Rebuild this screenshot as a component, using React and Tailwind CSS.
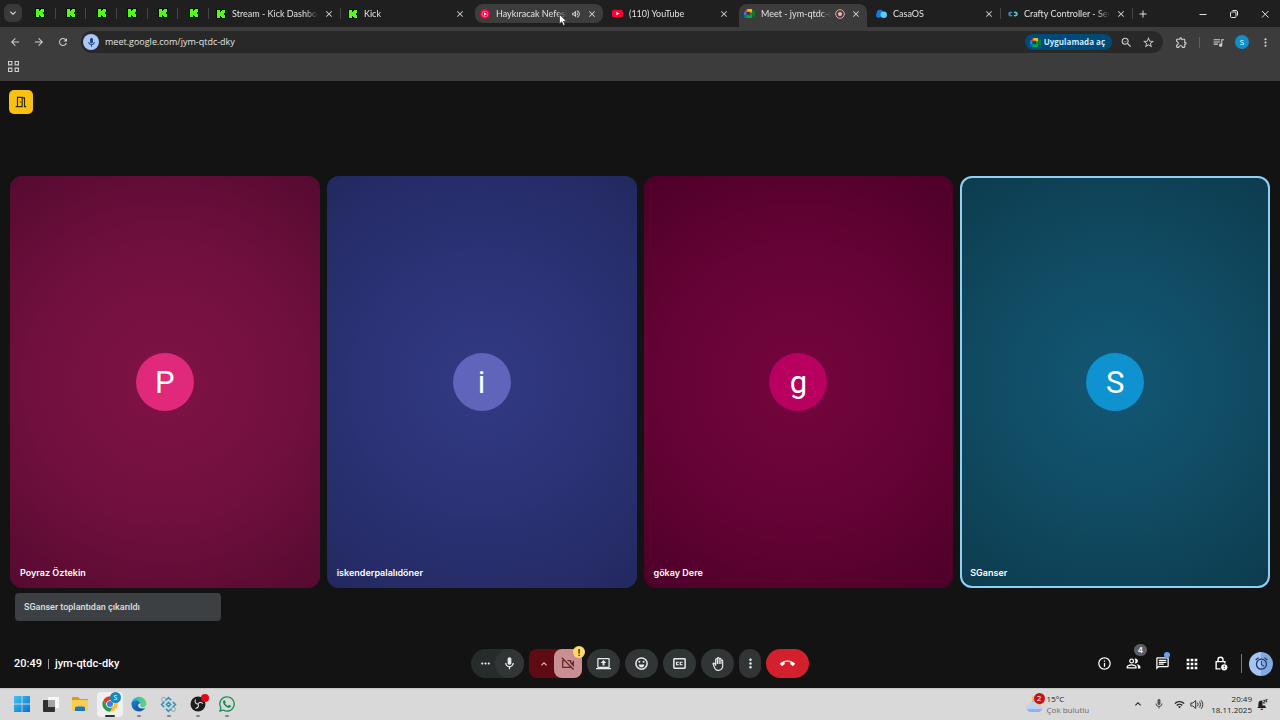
import React from "react";
import {
  MdAdd, MdAlarm, MdApps, MdArrowBack, MdArrowForward, MdCallEnd, MdClose, MdExpandLess, MdExpandMore,
  MdMoreHoriz, MdMoreVert, MdOutlineBackHand, MdOutlineChat,
  MdOutlineExtension, MdOutlineInfo, MdOutlineMeetingRoom, MdOutlineMic, MdOutlinePeopleAlt,
  MdOutlineVideocamOff, MdOutlineVolumeUp, MdQueueMusic, MdRefresh, MdStarBorder, MdWifi, MdZoomOut,
} from "react-icons/md";
import { FaWhatsapp } from "react-icons/fa";

const KickIcon = () => (
  <svg viewBox="0 0 10 10" className="size-[10px] shrink-0" aria-hidden="true">
    <rect width="10" height="10" rx="1" fill="#04140a" />
    <path d="M1 1h3v2h1V2h1V1h3v3H8v2h1v3H6V8H5V7H4v2H1z" fill="#53fc18" />
  </svg>
);

const MusicIcon = () => (
  <svg viewBox="0 0 20 20" className="size-[10px] shrink-0" aria-hidden="true">
    <circle cx="10" cy="10" r="10" fill="#f00042" />
    <circle cx="10" cy="10" r="5.8" fill="none" stroke="#ff9db5" strokeWidth="1.3" />
    <path d="M8 6.6 13.6 10 8 13.4z" fill="#fff" />
  </svg>
);

const YouTubeIcon = () => (
  <svg viewBox="0 0 20 20" className="size-[11px] shrink-0" aria-hidden="true">
    <rect y="3" width="20" height="14" rx="4" fill="#ff0033" />
    <path d="M8 6.8 13.5 10 8 13.2z" fill="#fff" />
  </svg>
);

const MeetIcon = () => (
  <svg viewBox="0 0 24 20" className="h-[9px] w-[11px] shrink-0" aria-hidden="true">
    <path d="M7 0v7H0z" fill="#ea4335" />
    <path d="M0 7h5v7H0z" fill="#2684fc" />
    <path d="M0 14h5v6H2a2 2 0 0 1-2-2z" fill="#0066da" />
    <path d="M7 0h9a2 2 0 0 1 2 2v6l-4 2V6H7z" fill="#ffba00" />
    <path d="M5 14h9v-4l4-2v10a2 2 0 0 1-2 2H5z" fill="#00ac47" />
    <path d="m14 10 8.500-7.300c.6-.5 1.500 0 1.500.8v13c0 .8-.9 1.300-1.500.8z" fill="#00832d" />
  </svg>
);

const CasaIcon = () => (
  <svg viewBox="0 0 22 20" className="h-[10px] w-[11px] shrink-0" aria-hidden="true">
    <circle cx="8" cy="8" r="6.500" fill="#1478dc" />
    <circle cx="5" cy="12.500" r="5" fill="#1478dc" />
    <circle cx="15.500" cy="11.500" r="6.500" fill="#52d0fb" />
  </svg>
);

const CraftyIcon = () => (
  <svg viewBox="0 0 20 20" className="size-[10px] shrink-0" fill="none" strokeWidth="2.600" aria-hidden="true">
    <path d="M8 7.500A3.600 3.600 0 1 0 8 12.500" stroke="#3d8fd6" />
    <path d="M12 7.500A3.600 3.600 0 1 1 12 12.500" stroke="#5ad0e6" />
    <path d="M3 10h3M14 10h3" stroke="#8fb9e8" strokeWidth="1.500" />
  </svg>
);

const RecordIcon = () => (
  <svg viewBox="0 0 20 20" className="size-[10px] shrink-0" aria-hidden="true">
    <circle cx="10" cy="10" r="8.600" fill="none" stroke="#f2b8b5" strokeWidth="1.800" />
    <circle cx="10" cy="10" r="4.200" fill="#f2b8b5" />
  </svg>
);

const tabs = [
  { title: "Stream - Kick Dashboard", icon: <KickIcon />, line: true },
  { title: "Kick", icon: <KickIcon /> },
  { title: "Haykıracak Nefesim", icon: <MusicIcon />, hover: true, extra: <MdOutlineVolumeUp className="size-[10px] shrink-0" /> },
  { title: "(110) YouTube", icon: <YouTubeIcon /> },
  { title: "Meet - jym-qtdc-dky", icon: <MeetIcon />, active: true, extra: <RecordIcon /> },
  { title: "CasaOS", icon: <CasaIcon />, line: true },
  { title: "Crafty Controller - Server", icon: <CraftyIcon />, line: true },
];

function Tab({ tab }) {
  const face = tab.active ? "bg-[#3c3c3c] rounded-t-lg pb-1" : tab.hover ? "bg-[#3d3d3d] rounded-lg mb-1" : "mb-1";
  return (
    <div className="flex h-full max-w-[132px] min-w-0 flex-1 items-stretch px-0.5 pt-1">
      <div className={`flex min-w-0 flex-1 items-center gap-1 pr-1.5 pl-[5px] ${face}`}>
        <button role="tab" aria-selected={!!tab.active} className="flex min-w-0 flex-1 items-center gap-1.5">
          {tab.icon}
          <span className="min-w-0 flex-1 overflow-hidden text-left whitespace-nowrap [mask-image:linear-gradient(to_right,black_85%,transparent)]">
            {tab.title}
          </span>
        </button>
        {tab.extra}
        <button aria-label={`${tab.title} sekmesini kapat`} className="pl-0.5">
          <MdClose className="size-[10px] text-[#dedede]" />
        </button>
      </div>
      {tab.line && <span className="mt-1 mb-2 -mr-0.5 w-px bg-[#474747]" />}
    </div>
  );
}

function TabStrip() {
  return (
    <header className="flex h-[27px] items-stretch bg-[#1f1f1f] pl-1 text-[9px] leading-3 text-[#e2e2e2] [font-family:Lato,sans-serif]">
      <button aria-label="Sekmelerde ara" className="mt-1 mr-[3px] grid size-[18px] place-items-center rounded-md bg-[#3a3a3a]">
        <MdExpandMore className="size-3" />
      </button>
      <div role="tablist" className="flex min-w-0 flex-1">
        <div className="grid w-[184px] shrink-0 grid-cols-6">
          {[1, 2, 3, 4, 5, 6].map((n) => (
            <button key={n} role="tab" aria-selected="false" aria-label={`Kick ${n}`} className="flex items-center justify-center pb-px">
              <span className="flex-1" />
              <KickIcon />
              <span className="flex flex-1 justify-end"><span className="h-[11px] w-px bg-[#474747]" /></span>
            </button>
          ))}
        </div>
        {tabs.map((t) => <Tab key={t.title} tab={t} />)}
        <button aria-label="Yeni sekme" className="px-1"><MdAdd className="size-3" /></button>
      </div>
      <div className="flex items-center">
        <button aria-label="Simge durumuna küçült" className="grid w-[30px] place-items-center">
          <svg viewBox="0 0 10 10" className="size-[10px]" stroke="currentColor"><path d="M1.500 5.500h7" /></svg>
        </button>
        <button aria-label="Önceki boyut" className="grid w-8 place-items-center">
          <svg viewBox="0 0 10 10" className="size-[10px]" fill="none" stroke="currentColor"><rect x="1.500" y="3" width="5.500" height="5.500" rx="1" /><path d="M3.500 1.500h3.500a1.500 1.500 0 0 1 1.500 1.500v3.500" /></svg>
        </button>
        <button aria-label="Kapat" className="grid w-[30px] place-items-center">
          <svg viewBox="0 0 10 10" className="size-[10px]" stroke="currentColor"><path d="m2 2 6.500 6.500M8.500 2 2 8.500" /></svg>
        </button>
      </div>
    </header>
  );
}

function Toolbar() {
  return (
    <nav className="bg-[#3c3c3c] text-[#d0d0d0]">
      <div className="flex h-[30px] items-center pr-2 pl-[9px]">
        <button aria-label="Geri" className="mr-3"><MdArrowBack className="size-3" /></button>
        <button aria-label="İleri" className="mr-3"><MdArrowForward className="size-3" /></button>
        <button aria-label="Yenile" className="mr-3"><MdRefresh className="size-3" /></button>
        <div className="flex h-[22px] min-w-0 flex-1 items-center rounded-full bg-[#282828] pr-2 pl-0.5">
          <button aria-label="Mikrofon kullanılıyor" className="grid size-4 place-items-center rounded-full bg-[#a8c7fa] text-[#1d3f77]">
            <MdOutlineMic className="size-[11px]" />
          </button>
          <input aria-label="Adres çubuğu" defaultValue="meet.google.com/jym-qtdc-dky" className="ml-1.5 min-w-0 flex-1 bg-transparent text-[9px] leading-4 text-[#e3e3e3] outline-none" />
          <button className="mr-2 flex h-4 items-center gap-[3px] rounded-full bg-[#004a77] pr-[7px] pl-[5px] text-[8px] font-bold text-[#c8e8ff]">
            <MeetIcon />Uygulamada aç
          </button>
          <button aria-label="Uzaklaştır" className="mr-[9px]"><MdZoomOut className="size-[13px]" /></button>
          <button aria-label="Yer işareti ekle"><MdStarBorder className="size-[13px]" /></button>
        </div>
        <button aria-label="Uzantılar" className="ml-3"><MdOutlineExtension className="size-[13px]" /></button>
        <span className="ml-[11px] h-[11px] w-px bg-[#606060]" />
        <button aria-label="Medya denetimi" className="ml-3"><MdQueueMusic className="size-[13px]" /></button>
        <button aria-label="Profil" className="ml-2.5 grid size-[14px] place-items-center rounded-full bg-[#0f90cc] text-[8px] leading-none text-white">S</button>
        <button aria-label="Chrome menüsü" className="ml-2.5"><MdMoreVert className="size-[13px]" /></button>
      </div>
      <div className="flex h-6 items-start pt-1 pl-2">
        <button aria-label="Sekme grupları">
          <svg viewBox="0 0 10 10" className="size-[11px]" fill="none" stroke="currentColor">
            <path d="M.5.5h3v3h-3zM6.500.5h3v3h-3zM.5 6.500h3v3h-3zM6.500 6.500h3v3h-3z" />
          </svg>
        </button>
      </div>
    </nav>
  );
}

const people = [
  { name: "Poyraz Öztekin", letter: "P", tile: "bg-[radial-gradient(circle_at_center,#801246,#71103e_50%,#560a30)]", dot: "bg-[#e0297b]" },
  { name: "iskenderpalalıdöner", letter: "i", tile: "bg-[radial-gradient(circle_at_center,#323a84,#2b3275_50%,#222960)]", dot: "bg-[#6065bb]" },
  { name: "gökay Dere", letter: "g", tile: "bg-[radial-gradient(circle_at_center,#74053e,#660336_50%,#4d0029)]", dot: "bg-[#b7005f]" },
  { name: "SGanser", letter: "S", tile: "bg-[radial-gradient(circle_at_center,#135774,#104b63_50%,#0d3b4d)]", dot: "bg-[#0f93d0]", speaking: true },
];

function Tile({ person }) {
  return (
    <section className={`grid min-h-60 grid-rows-[1fr_auto_1fr] overflow-hidden rounded-xl text-white ${person.tile} ${person.speaking ? "inset-ring-2 inset-ring-[#8fd0f5]" : ""}`}>
      <span />
      <div className={`grid size-[58px] place-items-center justify-self-center rounded-full text-[31px] leading-none [font-family:Roboto,sans-serif] ${person.dot}`}>
        {person.letter}
      </div>
      <h2 className="self-end pb-2 pl-[10px] text-[9px] leading-[14px] font-semibold">{person.name}</h2>
    </section>
  );
}

const round = "grid h-[29px] place-items-center rounded-full bg-[#323536]";

function Controls() {
  return (
    <div className="flex items-center gap-[5px] text-[#e8eaed]">
      <div className="flex h-[29px] rounded-full bg-[#282b2c]">
        <button aria-label="Ses ayarları" className="grid w-6 place-items-center pl-1"><MdMoreHoriz className="size-[13px]" /></button>
        <button aria-label="Mikrofonu kapat" className={`${round} w-[29px]`}><MdOutlineMic className="size-[15px]" /></button>
      </div>
      <div className="relative flex h-[29px] rounded-lg bg-[#5e0b13]">
        <button aria-label="Video ayarları" className="grid w-[25px] place-items-center pl-1 text-[#f3c7c6]"><MdExpandLess className="size-3" /></button>
        <button aria-label="Kamerayı aç" className="grid w-7 place-items-center rounded-lg bg-[#c98f93] text-[#67272d]"><MdOutlineVideocamOff className="size-4" /></button>
        <span className="absolute -top-[3px] -right-[3px] grid size-3 place-items-center rounded-full bg-[#fddc69] text-[9px] leading-none font-bold text-[#3a2f00]">!</span>
      </div>
      <button aria-label="Şimdi sun" className={`${round} w-[33px]`}>
        <svg viewBox="0 0 24 24" className="size-[15px]" fill="currentColor"><path fillRule="evenodd" d="M4 3h16a2 2 0 0 1 2 2v12a2 2 0 0 1-2 2h4v2H0v-2h4a2 2 0 0 1-2-2V5a2 2 0 0 1 2-2Zm0 2v12h16V5H4Z" /><path d="m12 6.500 4.500 4.500H13.500v4h-3v-4H7.500z" /></svg>
      </button>
      <button aria-label="İfade gönder" className={`${round} w-[33px]`}>
        <svg viewBox="0 0 24 24" className="size-[15px]" fill="none" stroke="currentColor" strokeWidth="2.400"><circle cx="12" cy="12" r="9" /><path d="M7.500 13.500h9a4.500 4.500 0 0 1-9 0z" fill="currentColor" stroke="none" /><circle cx="8.600" cy="9.300" r="1.600" fill="currentColor" stroke="none" /><circle cx="15.400" cy="9.300" r="1.600" fill="currentColor" stroke="none" /></svg>
      </button>
      <button aria-label="Altyazıları aç" className={`${round} w-[33px]`}>
        <svg viewBox="0 0 24 24" className="size-[15px]" fill="none" stroke="currentColor" strokeWidth="2.400"><rect x="3" y="4.500" width="18" height="15" rx="1" /><path d="M11 10H7.200v4H11M17 10h-3.800v4H17" strokeWidth="1.900" /></svg>
      </button>
      <button aria-label="El kaldır" className={`${round} w-[33px]`}><MdOutlineBackHand className="size-[14px]" /></button>
      <button aria-label="Diğer seçenekler" className={`${round} w-[22px]`}><MdMoreVert className="size-[15px]" /></button>
      <button aria-label="Aramadan ayrıl" className="grid h-[29px] w-[43px] place-items-center rounded-full bg-[#d2202c] text-white"><MdCallEnd className="size-[15px]" /></button>
    </div>
  );
}

function MeetBar() {
  return (
    <footer className="grid grid-cols-[1fr_auto_1fr] items-center px-[7px] pt-7 pb-[10px] text-white">
      <div className="flex items-center gap-1.5 pl-[7px] text-[11px] leading-4 font-medium [font-family:Roboto,sans-serif]">
        <time>20:49</time>
        <span className="h-[10px] w-px bg-[#9a9a9a]" />
        <span>jym-qtdc-dky</span>
      </div>
      <Controls />
      <div className="flex items-center justify-end">
        <button aria-label="Toplantı bilgileri" className="grid w-[29px] place-items-center"><MdOutlineInfo className="size-[15px]" /></button>
        <button aria-label="Kişiler" className="relative grid w-[29px] place-items-center">
          <MdOutlinePeopleAlt className="size-[15px]" />
          <span className="absolute -top-3 left-[15px] grid h-3 w-[13px] place-items-center rounded-full bg-[#5c5f61] text-[8px] leading-none font-semibold">4</span>
        </button>
        <button aria-label="Sohbet" className="relative grid w-[29px] place-items-center">
          <MdOutlineChat className="size-[15px]" />
          <span className="absolute -top-1 left-4 size-[6px] rounded-full bg-[#6f9bf0]" />
        </button>
        <button aria-label="Toplantı araçları" className="grid w-[29px] place-items-center"><MdApps className="size-4" /></button>
        <button aria-label="Toplantı sahibi denetimleri" className="grid w-[29px] place-items-center">
          <svg viewBox="0 0 24 24" className="size-[15px]" fill="none" stroke="currentColor" strokeWidth="2.200">
            <path d="M12 20.500H5V9h14v3M8 9V6a4 4 0 0 1 8 0v3" />
            <circle cx="18" cy="18" r="5" fill="currentColor" stroke="none" />
            <path d="M18 15.500v2.500M18 19.500v1.200" stroke="#131313" strokeWidth="1.600" />
          </svg>
        </button>
        <span className="mr-[7px] ml-1.5 h-[19px] w-px bg-[#77797b]" />
        <button aria-label="Hatırlatıcı" className="grid size-6 place-items-center rounded-full bg-[linear-gradient(to_right,#a6c5f3_50%,#84a9e0_50%)] text-[#17386e]"><MdAlarm className="size-[15px]" /></button>
      </div>
    </footer>
  );
}

const WindowsIcon = () => (
  <svg viewBox="0 0 16 16" className="size-4" aria-hidden="true">
    <defs><linearGradient id="win" x2="1" y2="1"><stop stopColor="#45c3f3" /><stop offset="1" stopColor="#0873c9" /></linearGradient></defs>
    <path d="M0 0h7.600v7.600H0zM8.400 0H16v7.600H8.400zM0 8.400h7.600V16H0zM8.400 8.400H16V16H8.400z" fill="url(#win)" />
  </svg>
);
const TaskViewIcon = () => (
  <svg viewBox="0 0 16 16" className="size-4" aria-hidden="true">
    <rect x="5" y="1" width="11" height="11" rx="1" fill="#f8f8f8" />
    <rect x="0" y="4" width="12" height="12" rx="1" fill="#303030" />
    <path d="M5 4h7v7H5z" fill="#a5a5a5" />
  </svg>
);
const FolderIcon = () => (
  <svg viewBox="0 0 18 16" className="h-4 w-[18px]" aria-hidden="true">
    <path d="M1 2a1 1 0 0 1 1-1h5l2 2h7a1 1 0 0 1 1 1v5H1z" fill="#dd9a18" />
    <rect x="1" y="4" width="16" height="11" rx="1.200" fill="#fbcf4e" />
    <path d="M4 15v-3a1.500 1.500 0 0 1 1.500-1.500h7A1.500 1.500 0 0 1 14 12v3z" fill="#1878c8" />
  </svg>
);
const ChromeIcon = () => (
  <svg viewBox="0 0 48 48" className="size-4" aria-hidden="true">
    <circle cx="24" cy="24" r="23" fill="#fff" />
    <path d="M4.100 12.500A23 23 0 0 1 43.900 12.500H24A11.500 11.500 0 0 0 14 29.700z" fill="#e33b2e" />
    <path d="M43.900 12.500A23 23 0 0 1 24 47l10-17.300A11.500 11.500 0 0 0 24 12.500z" fill="#fcc31e" />
    <path d="M4.100 12.500 14 29.700A11.500 11.500 0 0 0 34 29.700L24 47A23 23 0 0 1 4.100 12.500z" fill="#2a9d4a" />
    <circle cx="24" cy="24" r="9" fill="#3b7ded" />
  </svg>
);
const EdgeIcon = () => (
  <svg viewBox="0 0 32 32" className="size-4" aria-hidden="true">
    <defs>
      <linearGradient id="edgeTop" x2="1"><stop stopColor="#2aa7e8" /><stop offset="1" stopColor="#5fdc6d" /></linearGradient>
      <linearGradient id="edgeBase" x2="1" y2="1"><stop stopColor="#1b7fd0" /><stop offset="1" stopColor="#114a99" /></linearGradient>
    </defs>
    <path d="M1 14A15.200 15.200 0 0 1 31 15c0 5-3.500 7.500-8 7.500-4 0-5-1.500-4-3.500 2-5-2-9-7-9-5.500 0-9 3-11 4z" fill="url(#edgeTop)" />
    <path d="M1 14c2-3.500 6-6 11-5 4 1 6 3.500 6.500 6-6-1-6.500 10 4 10 3 0 5-1 6-1.500C26 28 21 31 16 31A15 15 0 0 1 1 14z" fill="url(#edgeBase)" />
  </svg>
);
const HubIcon = () => (
  <svg viewBox="0 0 32 32" className="size-[17px]" fill="none" stroke="#3097bd" strokeWidth="3" aria-hidden="true">
    <path d="m11 8 5-5 5 5M24 11l5 5-5 5M21 24l-5 5-5-5M8 21l-5-5 5-5" />
    <path d="m16 12 4 4-4 4-4-4z" />
    <g stroke="#8295a5" strokeWidth="1.500"><circle cx="7" cy="6.500" r="4" /><circle cx="25" cy="25" r="4" /></g>
  </svg>
);
const ObsIcon = () => (
  <svg viewBox="0 0 32 32" className="size-4" aria-hidden="true">
    <circle cx="16" cy="16" r="15" fill="#1c1c1e" />
    <g fill="none" stroke="#d5d5d5" strokeWidth="2.300"><path d="M16 16c-5 0-7-4-5-9" /><path d="M16 16c2.500-4.300 7-4 10-.5" /><path d="M16 16c2.500 4.300 0 8-5 9" /></g>
  </svg>
);

const apps = [
  { name: "Başlat", icon: <WindowsIcon /> },
  { name: "Görev görünümü", icon: <TaskViewIcon /> },
  { name: "Dosya Gezgini", icon: <FolderIcon /> },
  { name: "Google Chrome", icon: <ChromeIcon />, current: true, badge: "S" },
  { name: "Microsoft Edge", icon: <EdgeIcon />, running: true },
  { name: "Ağ Yöneticisi", icon: <HubIcon />, running: true },
  { name: "OBS Studio", icon: <ObsIcon />, running: true, alert: true },
  { name: "WhatsApp", icon: <FaWhatsapp className="size-[18px] text-[#178a55]" />, running: true },
];

function Taskbar() {
  return (
    <footer className="flex h-8 items-center border-t border-[#c5c5c5] bg-[#d9d9d9] pr-3 pb-px pl-[7px] text-[8px] leading-[11px] text-[#1e1e1e]">
      <div className="grid w-[235px] grid-cols-8 justify-items-center">
        {apps.map((a) => (
          <button key={a.name} aria-label={a.name} className={`relative grid h-[25px] w-[26px] place-items-center rounded ${a.current ? "bg-[#f0f0ee]" : ""}`}>
            {a.icon}
            {a.current && <span className="absolute bottom-0 left-2 h-[2px] w-[10px] rounded bg-[#303030]" />}
            {a.running && <span className="absolute bottom-0 left-[11px] h-[2px] w-1 rounded bg-[#858585]" />}
            {a.badge && <span className="absolute top-0 right-[2px] grid size-[11px] place-items-center rounded-full bg-[#1688bd] text-[7px] leading-none text-white">{a.badge}</span>}
            {a.alert && <span className="absolute top-[2px] right-[2px] size-2 rounded-full bg-[#e30613]" />}
          </button>
        ))}
      </div>
      <div className="flex-1" />
      <button className="mr-[43px] flex items-center gap-1 text-left">
        <span className="relative">
          <svg viewBox="0 0 17 17" className="size-[17px]" aria-hidden="true">
            <path d="M6 1a7 7 0 1 1-5 9 7 7 0 0 0 5-9z" fill="#f3b53c" />
            <path d="M4 16a3.500 3.500 0 0 1-.3-7 4.500 4.500 0 0 1 8.500-.3A3.700 3.700 0 0 1 13 16z" fill="#bcd3f5" />
            <path d="M4 16a3.500 3.500 0 0 1-2.800-3h14.800a3.600 3.600 0 0 1-3 3z" fill="#8fb2e8" />
          </svg>
          <span className="absolute -top-[3px] -right-[2px] grid size-[11px] place-items-center rounded-full bg-[#c4141f] text-[8px] leading-none text-white">2</span>
        </span>
        <span className="grid"><span>15°C</span><span className="text-[#696969]">Çok bulutlu</span></span>
      </button>
      <button aria-label="Gizli simgeler" className="mr-[9px]"><MdExpandLess className="size-3" /></button>
      <button aria-label="Mikrofon" className="mr-[9px]"><MdOutlineMic className="size-3 text-[#555]" /></button>
      <button aria-label="Ağ ve ses" className="mr-[7px] flex gap-[5px]"><MdWifi className="size-[11px]" />
        <svg viewBox="0 0 16 12" className="h-[11px] w-[14px]" fill="none" stroke="currentColor" strokeWidth="1"><path d="M1 4.300h2.300L6.500 1.500v9L3.300 7.700H1zM8.500 4a3 3 0 0 1 0 4M10.500 2.500a5 5 0 0 1 0 7M12.500 1a7 7 0 0 1 0 10" /></svg>
      </button>
      <button className="mr-[5px] grid text-right"><time>20:49</time><span>18.11.2025</span></button>
      <button aria-label="Bildirimler">
        <svg viewBox="0 0 16 16" className="size-[11px]" fill="currentColor"><path d="M7 2a5 5 0 0 0-5 5v4L.5 13h13L12 11V9.500H8V2.100zM5 14h4a2 2 0 0 1-4 0z" /><path d="M9 2h3L9 6h3M12.500.5H15L12.500 4H15" fill="none" stroke="currentColor" strokeWidth="1.200" /></svg>
      </button>
    </footer>
  );
}

export default function App() {
  return (
    <div className="flex min-h-screen flex-col bg-[#131313] [font-family:'Open_Sans','Noto_Sans',sans-serif]">
      <TabStrip />
      <Toolbar />
      <main className="flex flex-1 flex-col [font-family:Inter,sans-serif]">
        <div className="px-[9px] pt-[9px] pb-[62px]">
          <button aria-label="Bekleme odası" className="grid size-6 place-items-center rounded-[5px] bg-[#f8c112] text-[#332800]"><MdOutlineMeetingRoom className="size-[14px]" /></button>
        </div>
        <div className="grid flex-1 grid-cols-4 gap-[7px] px-[10px]">
          {people.map((p) => <Tile key={p.name} person={p} />)}
        </div>
        <div className="mt-[5px] pl-[15px]">
          <p role="status" className="w-[206px] rounded-sm bg-[#3c4043] px-[9px] py-[7px] text-[9px] leading-[14px] font-medium text-[#dfe1e3] [font-family:Roboto,sans-serif]">SGanser toplantıdan çıkarıldı</p>
        </div>
        <MeetBar />
      </main>
      <Taskbar />
      <svg viewBox="0 0 12 18" className="pointer-events-none absolute top-[14px] left-[559px] h-3 w-2" aria-hidden="true">
        <path d="M.7.700v14.200l3.400-3.200 2.400 5.400 2.500-1.100-2.300-5.200h4.600z" fill="#fff" stroke="#222" />
      </svg>
    </div>
  );
}
